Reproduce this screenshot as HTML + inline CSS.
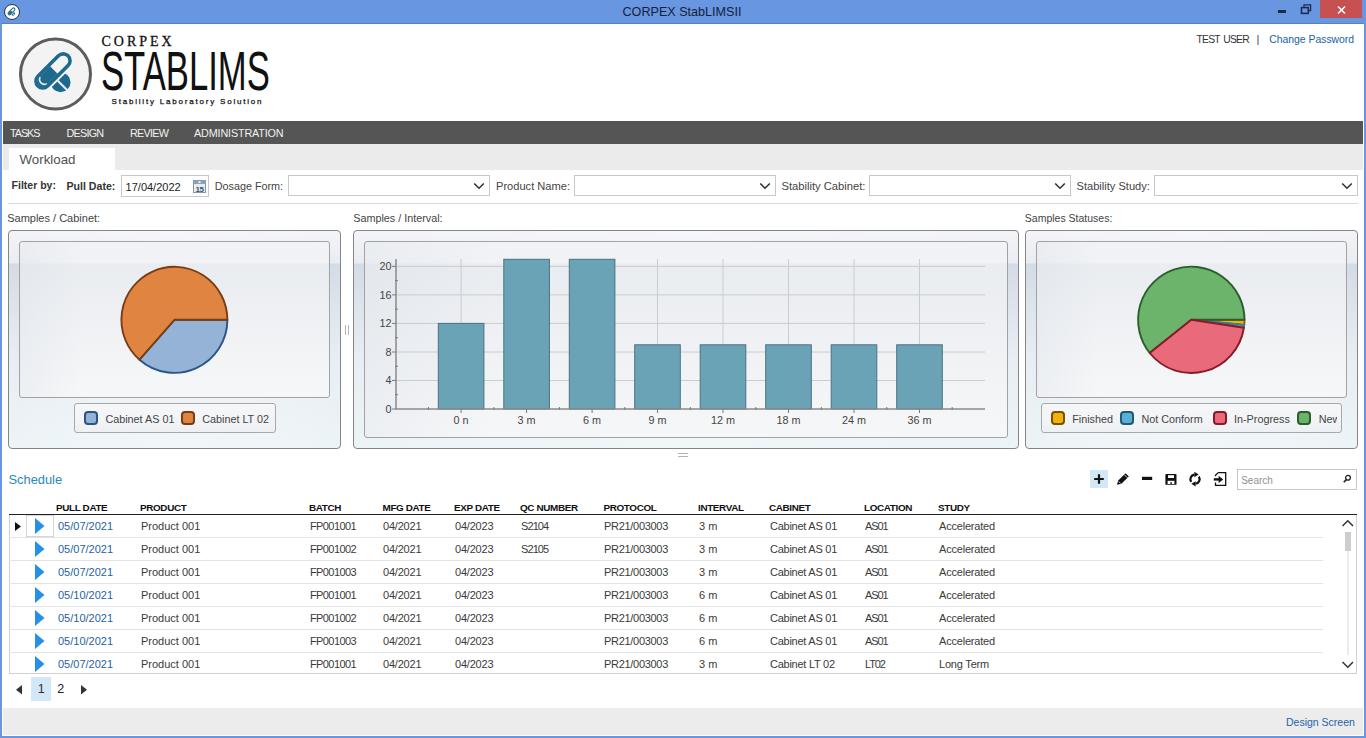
<!DOCTYPE html><html><head><meta charset="utf-8"><style>
html,body{margin:0;padding:0;width:1366px;height:738px;overflow:hidden;background:#fff;}
body{position:relative;font-family:"Liberation Sans",sans-serif;}
.t{position:absolute;white-space:nowrap;}
.b{position:absolute;box-sizing:border-box;}
svg{position:absolute;}
</style></head><body>
<div class="b" style="left:0px;top:0px;width:1366px;height:23px;background:#6896e0"></div>
<div class="b" style="left:0px;top:0px;width:2px;height:738px;background:#6896e0"></div>
<div class="b" style="left:1364px;top:0px;width:2px;height:738px;background:#6896e0"></div>
<div class="b" style="left:0px;top:736px;width:1366px;height:2px;background:#6896e0"></div>
<div class="b" style="left:1320px;top:0px;width:42px;height:18px;background:#c75050"></div>
<div class="b" style="left:2px;top:23px;width:1362px;height:1px;background:#5d7fc0"></div>
<svg style="left:3px;top:3px" width="18" height="18" viewBox="0 0 18 18">
<circle cx="9" cy="9" r="7.5" fill="#fdfdfd" stroke="#1f3556" stroke-width="1"/>
<g transform="translate(9 9) scale(0.2) translate(-41.5 -40) translate(39 36.9) rotate(-45)">
 <circle cx="-2.7" cy="13.4" r="10" fill="#1e6a8e"/>
 <rect x="-5" y="2" width="3" height="24" fill="#fdfdfd"/>
 <rect x="-25" y="-11" width="50" height="22" rx="11" fill="#fdfdfd"/>
 <rect x="-21.3" y="-6.8" width="42.6" height="13.6" rx="6.8" fill="none" stroke="#1e6a8e" stroke-width="5"/>
 <path d="M1.2 -5.3 H-14.5 A5.3 5.3 0 0 0 -14.5 5.3 H1.2 Z" fill="#1e6a8e"/>
</g>
</svg>
<div class="t" style="top:5.73px;font-size:12.6px;line-height:12.6px;color:#14213d;font-weight:400;left:622.5px;">CORPEX StabLIMSII</div>
<div class="b" style="left:1278px;top:10px;width:8px;height:3px;background:#1a2a4a"></div>
<svg style="left:1296px;top:0px" width="20" height="18" viewBox="1296 0 20 18">
<rect x="1301.5" y="7.6" width="6.8" height="5.8" fill="none" stroke="#1a2a4a" stroke-width="1.5"/>
<path d="M1304 6.8 V4.9 H1310.6 V10.6 H1309" fill="none" stroke="#1a2a4a" stroke-width="1.3"/>
</svg>
<svg style="left:1334px;top:3px" width="14" height="14" viewBox="0 0 14 14">
<path d="M4 3.5 L11 10.5 M11 3.5 L4 10.5" stroke="#fff" stroke-width="1.6"/>
</svg>
<svg style="left:14px;top:34px" width="84" height="80" viewBox="0 0 84 80">
<circle cx="41.5" cy="40" r="35" fill="#f3f3f3" stroke="#5c5c5c" stroke-width="3"/>
<g transform="translate(39 36.9) rotate(-45)">
 <circle cx="-2.7" cy="13.4" r="10" fill="#1e6a8e"/>
 <rect x="-4.6" y="2" width="2" height="24" fill="#f3f3f3"/>
 <rect x="-24.5" y="-10.5" width="49" height="21" rx="10.5" fill="#f3f3f3"/>
 <rect x="-21.3" y="-6.8" width="42.6" height="13.6" rx="6.8" fill="none" stroke="#1e6a8e" stroke-width="3.6"/>
 <path d="M1.2 -5.3 H-14.5 A5.3 5.3 0 0 0 -14.5 5.3 H1.2 Z" fill="#1e6a8e"/>
 <path d="M-13.5 -4.6 A4.8 4.8 0 0 0 -13.5 4.6" fill="none" stroke="#f3f3f3" stroke-width="1.5"/>
</g>
</svg>
<div class="t" style="top:35.05px;font-size:14px;line-height:14px;color:#111;font-weight:400;left:101.5px;font-family:'Liberation Serif', serif;letter-spacing:3.0px;-webkit-text-stroke:0.3px #111;">CORPEX</div>
<div class="t" style="left:100.5px;top:40.5px;font-family:'Liberation Sans',sans-serif;font-size:56px;line-height:60px;color:#111;transform:scaleX(0.619);transform-origin:0 0;letter-spacing:0px">STABLIMS</div>
<div class="t" style="top:97.53px;font-size:8px;line-height:8px;color:#111;font-weight:400;left:111.5px;letter-spacing:1.8px;-webkit-text-stroke:0.25px #111;">Stability Laboratory Solution</div>
<div class="t" style="top:34.78px;font-size:10.3px;line-height:10.3px;color:#333;font-weight:400;left:1196.5px;letter-spacing:-0.75px;word-spacing:1.5px;">TEST USER</div>
<div class="t" style="top:34.19px;font-size:11px;line-height:11px;color:#444;font-weight:400;left:1256.5px;">|</div>
<div class="t" style="top:34.50px;font-size:10.4px;line-height:10.4px;color:#2062a8;font-weight:400;left:1269.2px;">Change Password</div>
<div class="b" style="left:3px;top:121px;width:1360px;height:23px;background:#555555"></div>
<div class="t" style="top:127.66px;font-size:10.8px;line-height:10.8px;color:#f2f2f2;font-weight:400;left:10px;letter-spacing:-1.05px;">TASKS</div>
<div class="t" style="top:127.66px;font-size:10.8px;line-height:10.8px;color:#f2f2f2;font-weight:400;left:66.5px;letter-spacing:-0.75px;">DESIGN</div>
<div class="t" style="top:127.66px;font-size:10.8px;line-height:10.8px;color:#f2f2f2;font-weight:400;left:130px;letter-spacing:-0.75px;">REVIEW</div>
<div class="t" style="top:127.66px;font-size:10.8px;line-height:10.8px;color:#f2f2f2;font-weight:400;left:194px;letter-spacing:-0.15px;">ADMINISTRATION</div>
<div class="b" style="left:3px;top:144px;width:1360px;height:26px;background:#ebebeb"></div>
<div class="b" style="left:9px;top:148px;width:106px;height:22px;background:#fff"></div>
<div class="t" style="top:152.64px;font-size:13.3px;line-height:13.3px;color:#505050;font-weight:400;left:19.5px;">Workload</div>
<div class="t" style="top:180.41px;font-size:10.5px;line-height:10.5px;color:#333;font-weight:700;left:11.6px;">Filter by:</div>
<div class="t" style="top:180.83px;font-size:10.6px;line-height:10.6px;color:#333;font-weight:700;left:66.5px;">Pull Date:</div>
<div class="b" style="left:121px;top:175px;width:88px;height:22px;border:1px solid #c8c8c8;background:#fff"></div>
<div class="t" style="top:181.59px;font-size:11px;line-height:11px;color:#222;font-weight:400;left:125.6px;">17/04/2022</div>
<svg style="left:192px;top:179px" width="14" height="14" viewBox="0 0 14 14">
<rect x="1.5" y="1.5" width="12" height="12" fill="#e6ecf2" stroke="#8797a8" stroke-width="1"/>
<rect x="1.5" y="1.5" width="12" height="3.5" fill="#8ba2ba"/>
<rect x="6.5" y="2.3" width="2" height="1.6" fill="#fff"/>
<text x="7.6" y="12.6" font-family="Liberation Sans" font-size="8" font-weight="700" text-anchor="middle" fill="#3c5670" letter-spacing="-0.3">15</text>
</svg>
<div class="t" style="top:180.86px;font-size:10.8px;line-height:10.8px;color:#444;font-weight:400;left:214.7px;">Dosage Form:</div>
<div class="b" style="left:288px;top:175px;width:202px;height:21px;border:1px solid #c8c8c8;background:#fff"></div>
<svg style="left:472.5px;top:181px" width="12" height="10" viewBox="0 0 12 10"><path d="M1.2 2.5 L6 7.2 L10.8 2.5" fill="none" stroke="#333" stroke-width="1.6"/></svg>
<div class="t" style="top:180.60px;font-size:11.1px;line-height:11.1px;color:#444;font-weight:400;left:496px;">Product Name:</div>
<div class="b" style="left:574px;top:175px;width:202px;height:21px;border:1px solid #c8c8c8;background:#fff"></div>
<svg style="left:758.5px;top:181px" width="12" height="10" viewBox="0 0 12 10"><path d="M1.2 2.5 L6 7.2 L10.8 2.5" fill="none" stroke="#333" stroke-width="1.6"/></svg>
<div class="t" style="top:180.52px;font-size:11.2px;line-height:11.2px;color:#444;font-weight:400;left:781.5px;">Stability Cabinet:</div>
<div class="b" style="left:869px;top:175px;width:202px;height:21px;border:1px solid #c8c8c8;background:#fff"></div>
<svg style="left:1053.5px;top:181px" width="12" height="10" viewBox="0 0 12 10"><path d="M1.2 2.5 L6 7.2 L10.8 2.5" fill="none" stroke="#333" stroke-width="1.6"/></svg>
<div class="t" style="top:180.60px;font-size:11.1px;line-height:11.1px;color:#444;font-weight:400;left:1076.5px;">Stability Study:</div>
<div class="b" style="left:1154px;top:175px;width:204px;height:21px;border:1px solid #c8c8c8;background:#fff"></div>
<svg style="left:1340.5px;top:181px" width="12" height="10" viewBox="0 0 12 10"><path d="M1.2 2.5 L6 7.2 L10.8 2.5" fill="none" stroke="#333" stroke-width="1.6"/></svg>
<div class="b" style="left:8px;top:203px;width:1350px;height:1px;background:#d9d9d9"></div>
<div class="t" style="top:212.69px;font-size:11px;line-height:11px;color:#444;font-weight:400;left:7.2px;">Samples / Cabinet:</div>
<div class="t" style="top:212.56px;font-size:10.8px;line-height:10.8px;color:#444;font-weight:400;left:353.2px;">Samples / Interval:</div>
<div class="t" style="top:213.11px;font-size:10.5px;line-height:10.5px;color:#444;font-weight:400;left:1024.8px;">Samples Statuses:</div>
<div class="b" style="left:8px;top:230px;width:333px;height:219px;border:1px solid #858585;border-radius:4px;background:linear-gradient(to right, rgba(255,255,255,0) 0px, rgba(255,255,255,0.25) 50%, rgba(255,255,255,0) 100%),linear-gradient(to bottom,#f3f4f7 0px,#e9ecf1 32px,#d4dbe5 33px,#dde3eb 70px,#e8eef3 130px,#edf4f7 100%);"></div>
<div class="b" style="left:19px;top:241px;width:311px;height:157px;border:1px solid #a2a2a2;border-radius:3px;background:linear-gradient(to right,rgba(215,222,232,0.3) 0px,rgba(255,255,255,0) 20%),linear-gradient(to bottom,#f2f3f6 0px,#f0f2f5 21px,#e9ecf0 22px,#eef0f3 45%,#f6f7f8 100%);"></div>
<div class="b" style="left:353px;top:230px;width:666px;height:219px;border:1px solid #858585;border-radius:4px;background:linear-gradient(to right, rgba(255,255,255,0) 0px, rgba(255,255,255,0.25) 50%, rgba(255,255,255,0) 100%),linear-gradient(to bottom,#f3f4f7 0px,#e9ecf1 32px,#d4dbe5 33px,#dde3eb 70px,#e8eef3 130px,#edf4f7 100%);"></div>
<div class="b" style="left:364px;top:241px;width:644px;height:197px;border:1px solid #a2a2a2;border-radius:3px;background:linear-gradient(to right,rgba(215,222,232,0.3) 0px,rgba(255,255,255,0) 20%),linear-gradient(to bottom,#f2f3f6 0px,#f0f2f5 21px,#e9ecf0 22px,#eef0f3 45%,#f6f7f8 100%);"></div>
<div class="b" style="left:1025px;top:230px;width:333px;height:219px;border:1px solid #858585;border-radius:4px;background:linear-gradient(to right, rgba(255,255,255,0) 0px, rgba(255,255,255,0.25) 50%, rgba(255,255,255,0) 100%),linear-gradient(to bottom,#f3f4f7 0px,#e9ecf1 32px,#d4dbe5 33px,#dde3eb 70px,#e8eef3 130px,#edf4f7 100%);"></div>
<div class="b" style="left:1036px;top:241px;width:311px;height:157px;border:1px solid #a2a2a2;border-radius:3px;background:linear-gradient(to right,rgba(215,222,232,0.3) 0px,rgba(255,255,255,0) 20%),linear-gradient(to bottom,#f2f3f6 0px,#f0f2f5 21px,#e9ecf0 22px,#eef0f3 45%,#f6f7f8 100%);"></div>
<svg style="left:110px;top:255px" width="130" height="130" viewBox="110 255 130 130"><path d="M174.4 319.8 L227.40 319.80 A53 53 0 0 1 139.49 359.68 Z" fill="#94b3d7" stroke="#2a5585" stroke-width="1.9" stroke-linejoin="round"/><path d="M174.4 319.8 L139.49 359.68 A53 53 0 1 1 227.40 319.80 Z" fill="#e08442" stroke="#7a3c12" stroke-width="1.9" stroke-linejoin="round"/></svg>
<svg style="left:1126px;top:255px" width="130" height="130" viewBox="1126 255 130 130"><path d="M1191.3 319.8 L1244.50 319.80 A53.2 53.2 0 0 1 1244.25 324.99 Z" fill="#f2b210" stroke="#8a6000" stroke-width="1.9" stroke-linejoin="round"/><path d="M1191.3 319.8 L1244.25 324.99 A53.2 53.2 0 0 1 1243.90 327.76 Z" fill="#5ab0d2" stroke="#3a7a9a" stroke-width="1.9" stroke-linejoin="round"/><path d="M1191.3 319.8 L1149.72 352.99 A53.2 53.2 0 1 1 1244.50 319.80 Z" fill="#6cb46c" stroke="#2b5e2b" stroke-width="1.9" stroke-linejoin="round"/><path d="M1191.3 319.8 L1243.90 327.76 A53.2 53.2 0 0 1 1149.72 352.99 Z" fill="#e86a7b" stroke="#8a1a2a" stroke-width="1.9" stroke-linejoin="round"/></svg>
<div class="b" style="left:74px;top:403px;width:202px;height:30px;border:1px solid #a8a8a8;border-radius:3px;background:linear-gradient(to bottom,#f6f7f9,#eef1f4)"></div>
<div class="b" style="left:84px;top:411px;width:14px;height:14px;border:2px solid #2a5585;border-radius:4px;background:#94b3d7"></div>
<div class="t" style="top:413.86px;font-size:10.8px;line-height:10.8px;color:#444;font-weight:400;left:105.4px;">Cabinet AS 01</div>
<div class="b" style="left:181px;top:411px;width:14px;height:14px;border:2px solid #7a3c12;border-radius:4px;background:#e08442"></div>
<div class="t" style="top:413.86px;font-size:10.8px;line-height:10.8px;color:#444;font-weight:400;left:202.2px;">Cabinet LT 02</div>
<div class="b" style="left:1041px;top:403px;width:301px;height:30px;border:1px solid #a8a8a8;border-radius:3px;background:linear-gradient(to bottom,#f6f7f9,#eef1f4)"><div class="b" style="left:0;top:0;width:295px;height:28px;overflow:hidden">
<div class="b" style="left:9px;top:7px;width:14px;height:14px;border:2px solid #7a5200;border-radius:4px;background:#f2b210"></div>
<div class="t" style="left:30.200000000000045px;top:9.86px;font-size:10.8px;line-height:10.8px;color:#444">Finished</div>
<div class="b" style="left:78px;top:7px;width:14px;height:14px;border:2px solid #1f5a7a;border-radius:4px;background:#5ab0d2"></div>
<div class="t" style="left:99.5px;top:9.86px;font-size:10.8px;line-height:10.8px;color:#444">Not Conform</div>
<div class="b" style="left:171px;top:7px;width:14px;height:14px;border:2px solid #8a1a2a;border-radius:4px;background:#e86a7b"></div>
<div class="t" style="left:192px;top:9.86px;font-size:10.8px;line-height:10.8px;color:#444">In-Progress</div>
<div class="b" style="left:255px;top:7px;width:14px;height:14px;border:2px solid #2b5e2b;border-radius:4px;background:#6cb46c"></div>
<div class="t" style="left:276.70000000000005px;top:9.86px;font-size:10.8px;line-height:10.8px;color:#444">New</div>
</div></div>
<svg style="left:344px;top:325px" width="6" height="11"><path d="M1.5 0 V10 M4.5 0 V10" stroke="#b4b4b4" stroke-width="1"/></svg>
<svg style="left:678px;top:452px" width="11" height="6"><path d="M0 1.5 H10 M0 4.5 H10" stroke="#b4b4b4" stroke-width="1"/></svg>
<svg style="left:353px;top:230px" width="666" height="219" viewBox="353 230 666 219"><line x1="396" y1="380.5" x2="985" y2="380.5" stroke="#c9ccd2" stroke-width="1"/><line x1="396" y1="352.0" x2="985" y2="352.0" stroke="#c9ccd2" stroke-width="1"/><line x1="396" y1="323.4" x2="985" y2="323.4" stroke="#c9ccd2" stroke-width="1"/><line x1="396" y1="294.9" x2="985" y2="294.9" stroke="#c9ccd2" stroke-width="1"/><line x1="396" y1="266.4" x2="985" y2="266.4" stroke="#c9ccd2" stroke-width="1"/><line x1="461.1" y1="259" x2="461.1" y2="409.0" stroke="#c9ccd2" stroke-width="1"/><line x1="526.6" y1="259" x2="526.6" y2="409.0" stroke="#c9ccd2" stroke-width="1"/><line x1="592.1" y1="259" x2="592.1" y2="409.0" stroke="#c9ccd2" stroke-width="1"/><line x1="657.5" y1="259" x2="657.5" y2="409.0" stroke="#c9ccd2" stroke-width="1"/><line x1="723.0" y1="259" x2="723.0" y2="409.0" stroke="#c9ccd2" stroke-width="1"/><line x1="788.5" y1="259" x2="788.5" y2="409.0" stroke="#c9ccd2" stroke-width="1"/><line x1="854.0" y1="259" x2="854.0" y2="409.0" stroke="#c9ccd2" stroke-width="1"/><line x1="919.5" y1="259" x2="919.5" y2="409.0" stroke="#c9ccd2" stroke-width="1"/><rect x="438.3" y="323.4" width="45.6" height="85.6" fill="#6aa3b6" stroke="#4a7282" stroke-width="1"/><rect x="503.8" y="259.3" width="45.6" height="149.7" fill="#6aa3b6" stroke="#4a7282" stroke-width="1"/><rect x="569.3" y="259.3" width="45.6" height="149.7" fill="#6aa3b6" stroke="#4a7282" stroke-width="1"/><rect x="634.7" y="344.8" width="45.6" height="64.2" fill="#6aa3b6" stroke="#4a7282" stroke-width="1"/><rect x="700.2" y="344.8" width="45.6" height="64.2" fill="#6aa3b6" stroke="#4a7282" stroke-width="1"/><rect x="765.7" y="344.8" width="45.6" height="64.2" fill="#6aa3b6" stroke="#4a7282" stroke-width="1"/><rect x="831.2" y="344.8" width="45.6" height="64.2" fill="#6aa3b6" stroke="#4a7282" stroke-width="1"/><rect x="896.7" y="344.8" width="45.6" height="64.2" fill="#6aa3b6" stroke="#4a7282" stroke-width="1"/><line x1="396" y1="259" x2="396" y2="409.5" stroke="#8a8a8a" stroke-width="1.5"/><line x1="396" y1="409.0" x2="985" y2="409.0" stroke="#8a8a8a" stroke-width="1.5"/><line x1="392" y1="409.0" x2="396" y2="409.0" stroke="#7a7a7a" stroke-width="1"/><line x1="395" y1="394.7" x2="398" y2="394.7" stroke="#7a7a7a" stroke-width="1"/><line x1="392" y1="380.5" x2="396" y2="380.5" stroke="#7a7a7a" stroke-width="1"/><line x1="395" y1="366.2" x2="398" y2="366.2" stroke="#7a7a7a" stroke-width="1"/><line x1="392" y1="352.0" x2="396" y2="352.0" stroke="#7a7a7a" stroke-width="1"/><line x1="395" y1="337.7" x2="398" y2="337.7" stroke="#7a7a7a" stroke-width="1"/><line x1="392" y1="323.4" x2="396" y2="323.4" stroke="#7a7a7a" stroke-width="1"/><line x1="395" y1="309.2" x2="398" y2="309.2" stroke="#7a7a7a" stroke-width="1"/><line x1="392" y1="294.9" x2="396" y2="294.9" stroke="#7a7a7a" stroke-width="1"/><line x1="395" y1="280.7" x2="398" y2="280.7" stroke="#7a7a7a" stroke-width="1"/><line x1="392" y1="266.4" x2="396" y2="266.4" stroke="#7a7a7a" stroke-width="1"/><line x1="428.4" y1="407.0" x2="428.4" y2="410.0" stroke="#7a7a7a" stroke-width="1"/><line x1="493.9" y1="407.0" x2="493.9" y2="410.0" stroke="#7a7a7a" stroke-width="1"/><line x1="559.4" y1="407.0" x2="559.4" y2="410.0" stroke="#7a7a7a" stroke-width="1"/><line x1="624.8" y1="407.0" x2="624.8" y2="410.0" stroke="#7a7a7a" stroke-width="1"/><line x1="690.3" y1="407.0" x2="690.3" y2="410.0" stroke="#7a7a7a" stroke-width="1"/><line x1="755.8" y1="407.0" x2="755.8" y2="410.0" stroke="#7a7a7a" stroke-width="1"/><line x1="821.3" y1="407.0" x2="821.3" y2="410.0" stroke="#7a7a7a" stroke-width="1"/><line x1="886.8" y1="407.0" x2="886.8" y2="410.0" stroke="#7a7a7a" stroke-width="1"/><line x1="952.2" y1="407.0" x2="952.2" y2="410.0" stroke="#7a7a7a" stroke-width="1"/><line x1="461.1" y1="409.0" x2="461.1" y2="413.0" stroke="#7a7a7a" stroke-width="1"/><line x1="526.6" y1="409.0" x2="526.6" y2="413.0" stroke="#7a7a7a" stroke-width="1"/><line x1="592.1" y1="409.0" x2="592.1" y2="413.0" stroke="#7a7a7a" stroke-width="1"/><line x1="657.5" y1="409.0" x2="657.5" y2="413.0" stroke="#7a7a7a" stroke-width="1"/><line x1="723.0" y1="409.0" x2="723.0" y2="413.0" stroke="#7a7a7a" stroke-width="1"/><line x1="788.5" y1="409.0" x2="788.5" y2="413.0" stroke="#7a7a7a" stroke-width="1"/><line x1="854.0" y1="409.0" x2="854.0" y2="413.0" stroke="#7a7a7a" stroke-width="1"/><line x1="919.5" y1="409.0" x2="919.5" y2="413.0" stroke="#7a7a7a" stroke-width="1"/></svg>
<div class="t" style="top:403.86px;font-size:10.8px;line-height:10.8px;color:#444;font-weight:400;right:974.5px;">0</div>
<div class="t" style="top:375.34px;font-size:10.8px;line-height:10.8px;color:#444;font-weight:400;right:974.5px;">4</div>
<div class="t" style="top:346.82px;font-size:10.8px;line-height:10.8px;color:#444;font-weight:400;right:974.5px;">8</div>
<div class="t" style="top:318.30px;font-size:10.8px;line-height:10.8px;color:#444;font-weight:400;right:974.5px;">12</div>
<div class="t" style="top:289.78px;font-size:10.8px;line-height:10.8px;color:#444;font-weight:400;right:974.5px;">16</div>
<div class="t" style="top:261.26px;font-size:10.8px;line-height:10.8px;color:#444;font-weight:400;right:974.5px;">20</div>
<div class="t" style="top:414.86px;font-size:10.8px;line-height:10.8px;color:#444;font-weight:400;left:461.1px;transform:translateX(-50%);">0 n</div>
<div class="t" style="top:414.86px;font-size:10.8px;line-height:10.8px;color:#444;font-weight:400;left:526.58px;transform:translateX(-50%);">3 m</div>
<div class="t" style="top:414.86px;font-size:10.8px;line-height:10.8px;color:#444;font-weight:400;left:592.0600000000001px;transform:translateX(-50%);">6 m</div>
<div class="t" style="top:414.86px;font-size:10.8px;line-height:10.8px;color:#444;font-weight:400;left:657.54px;transform:translateX(-50%);">9 m</div>
<div class="t" style="top:414.86px;font-size:10.8px;line-height:10.8px;color:#444;font-weight:400;left:723.02px;transform:translateX(-50%);">12 m</div>
<div class="t" style="top:414.86px;font-size:10.8px;line-height:10.8px;color:#444;font-weight:400;left:788.5px;transform:translateX(-50%);">18 m</div>
<div class="t" style="top:414.86px;font-size:10.8px;line-height:10.8px;color:#444;font-weight:400;left:853.98px;transform:translateX(-50%);">24 m</div>
<div class="t" style="top:414.86px;font-size:10.8px;line-height:10.8px;color:#444;font-weight:400;left:919.46px;transform:translateX(-50%);">36 m</div>
<div class="t" style="top:473.62px;font-size:12.85px;line-height:12.85px;color:#2a88bb;font-weight:400;left:8.5px;">Schedule</div>
<div class="b" style="left:1090px;top:470px;width:18px;height:18px;background:#d2e8f7"></div>
<svg style="left:1080px;top:460px" width="160" height="32" viewBox="1080 460 160 32">
<path d="M1099 474.2 V483.8 M1094.2 479 H1103.8" stroke="#111" stroke-width="2.2"/>
<path d="M1117 484.8 L1118.2 480.6 L1125.6 473.2 L1128.8 476.4 L1121.4 483.8 Z" fill="#111"/>
<path d="M1118.6 481.4 L1120.6 483.4 M1124.2 474.6 L1127.4 477.8" stroke="#fff" stroke-width="0.8"/>
<path d="M1142 478.4 H1152.2" stroke="#111" stroke-width="3.2"/>
<path d="M1166.2 473.9 H1175.6 Q1176.5 473.9 1176.5 474.8 V484.8 H1165.4 V474.8 Q1165.4 473.9 1166.2 473.9 Z" fill="#111"/>
<rect x="1168" y="475.2" width="6" height="2.8" fill="#fff"/>
<rect x="1167.6" y="480.8" width="6.8" height="3.2" fill="#fff"/>
<rect x="1170.4" y="482.2" width="1.4" height="1.8" fill="#111"/>
<path d="M1191.23 481.84 A4.6 4.6 0 0 1 1194.36 474.64" fill="none" stroke="#111" stroke-width="2.2"/>
<path d="M1194.4 471.8 L1198.6 474.6 L1194.4 477.2 Z" fill="#111"/>
<path d="M1198.77 476.56 A4.6 4.6 0 0 1 1195.64 483.76" fill="none" stroke="#111" stroke-width="2.2"/>
<path d="M1195.6 481.2 L1191.4 483.8 L1195.6 486.6 Z" fill="#111"/>
<path d="M1218.2 472.6 H1225.7 V485.3 H1215.5 V482.5 M1215.5 476.3 V475.3 L1218.2 472.6" fill="none" stroke="#111" stroke-width="1.3"/>
<path d="M1213.8 479.4 H1219.5" stroke="#111" stroke-width="2.4"/>
<path d="M1218.6 475.8 L1223.2 479.4 L1218.6 483 Z" fill="#111"/>
</svg>
<div class="b" style="left:1237px;top:469px;width:120px;height:21px;border:1px solid #c8c8c8;background:#fff"></div>
<div class="t" style="top:476.03px;font-size:10px;line-height:10px;color:#909090;font-weight:400;left:1241.2px;">Search</div>
<svg style="left:1342px;top:474px" width="10" height="10" viewBox="0 0 10 10"><circle cx="6" cy="3.8" r="2.4" fill="none" stroke="#222" stroke-width="1.3"/><path d="M4.3 5.6 L1.8 8.3" stroke="#222" stroke-width="1.6"/></svg>
<div class="b" style="left:9px;top:514px;width:1348px;height:160px;border:1px solid #d0d0d0;border-top:none;background:#fff"></div>
<div class="b" style="left:9px;top:514px;width:1348px;height:1px;background:#222"></div>
<div class="t" style="top:502.62px;font-size:9.9px;line-height:9.9px;color:#111;font-weight:700;left:56px;letter-spacing:-0.35px;">PULL DATE</div>
<div class="t" style="top:502.62px;font-size:9.9px;line-height:9.9px;color:#111;font-weight:700;left:140px;letter-spacing:-0.35px;">PRODUCT</div>
<div class="t" style="top:502.62px;font-size:9.9px;line-height:9.9px;color:#111;font-weight:700;left:309px;letter-spacing:-0.35px;">BATCH</div>
<div class="t" style="top:502.62px;font-size:9.9px;line-height:9.9px;color:#111;font-weight:700;left:382.5px;letter-spacing:-0.35px;">MFG DATE</div>
<div class="t" style="top:502.62px;font-size:9.9px;line-height:9.9px;color:#111;font-weight:700;left:454px;letter-spacing:-0.35px;">EXP DATE</div>
<div class="t" style="top:502.62px;font-size:9.9px;line-height:9.9px;color:#111;font-weight:700;left:520px;letter-spacing:-0.35px;">QC NUMBER</div>
<div class="t" style="top:502.62px;font-size:9.9px;line-height:9.9px;color:#111;font-weight:700;left:603.5px;letter-spacing:-0.35px;">PROTOCOL</div>
<div class="t" style="top:502.62px;font-size:9.9px;line-height:9.9px;color:#111;font-weight:700;left:698px;letter-spacing:-0.35px;">INTERVAL</div>
<div class="t" style="top:502.62px;font-size:9.9px;line-height:9.9px;color:#111;font-weight:700;left:769px;letter-spacing:-0.35px;">CABINET</div>
<div class="t" style="top:502.62px;font-size:9.9px;line-height:9.9px;color:#111;font-weight:700;left:864px;letter-spacing:-0.35px;">LOCATION</div>
<div class="t" style="top:502.62px;font-size:9.9px;line-height:9.9px;color:#111;font-weight:700;left:938px;letter-spacing:-0.35px;">STUDY</div>
<div class="b" style="left:9px;top:537px;width:1314px;height:1px;background:#e3e3e3"></div>
<div class="t" style="top:520.69px;font-size:11px;line-height:11px;color:#1f5fa5;font-weight:400;left:58px;letter-spacing:0px;">05/07/2021</div>
<div class="t" style="top:520.69px;font-size:11px;line-height:11px;color:#3a3a3a;font-weight:400;left:141px;letter-spacing:0px;">Product 001</div>
<div class="t" style="top:520.69px;font-size:11px;line-height:11px;color:#3a3a3a;font-weight:400;left:310px;letter-spacing:-0.6px;">FP001001</div>
<div class="t" style="top:520.69px;font-size:11px;line-height:11px;color:#3a3a3a;font-weight:400;left:383px;letter-spacing:-0.2px;">04/2021</div>
<div class="t" style="top:520.69px;font-size:11px;line-height:11px;color:#3a3a3a;font-weight:400;left:455px;letter-spacing:-0.2px;">04/2023</div>
<div class="t" style="top:520.69px;font-size:11px;line-height:11px;color:#3a3a3a;font-weight:400;left:521px;letter-spacing:-0.9px;">S2104</div>
<div class="t" style="top:520.69px;font-size:11px;line-height:11px;color:#3a3a3a;font-weight:400;left:604px;letter-spacing:-0.3px;">PR21/003003</div>
<div class="t" style="top:520.69px;font-size:11px;line-height:11px;color:#3a3a3a;font-weight:400;left:699px;letter-spacing:0px;">3 m</div>
<div class="t" style="top:520.69px;font-size:11px;line-height:11px;color:#3a3a3a;font-weight:400;left:770px;letter-spacing:-0.25px;">Cabinet AS 01</div>
<div class="t" style="top:520.69px;font-size:11px;line-height:11px;color:#3a3a3a;font-weight:400;left:865px;letter-spacing:-1.1px;">AS01</div>
<div class="t" style="top:520.69px;font-size:11px;line-height:11px;color:#3a3a3a;font-weight:400;left:939px;letter-spacing:-0.2px;">Accelerated</div>
<svg style="left:35px;top:518px" width="10" height="16" viewBox="0 0 10 16"><path d="M0 0 L9.5 8 L0 16 Z" fill="#2590e6"/></svg>
<div class="b" style="left:9px;top:560px;width:1314px;height:1px;background:#e3e3e3"></div>
<div class="t" style="top:543.69px;font-size:11px;line-height:11px;color:#1f5fa5;font-weight:400;left:58px;letter-spacing:0px;">05/07/2021</div>
<div class="t" style="top:543.69px;font-size:11px;line-height:11px;color:#3a3a3a;font-weight:400;left:141px;letter-spacing:0px;">Product 001</div>
<div class="t" style="top:543.69px;font-size:11px;line-height:11px;color:#3a3a3a;font-weight:400;left:310px;letter-spacing:-0.6px;">FP001002</div>
<div class="t" style="top:543.69px;font-size:11px;line-height:11px;color:#3a3a3a;font-weight:400;left:383px;letter-spacing:-0.2px;">04/2021</div>
<div class="t" style="top:543.69px;font-size:11px;line-height:11px;color:#3a3a3a;font-weight:400;left:455px;letter-spacing:-0.2px;">04/2023</div>
<div class="t" style="top:543.69px;font-size:11px;line-height:11px;color:#3a3a3a;font-weight:400;left:521px;letter-spacing:-0.9px;">S2105</div>
<div class="t" style="top:543.69px;font-size:11px;line-height:11px;color:#3a3a3a;font-weight:400;left:604px;letter-spacing:-0.3px;">PR21/003003</div>
<div class="t" style="top:543.69px;font-size:11px;line-height:11px;color:#3a3a3a;font-weight:400;left:699px;letter-spacing:0px;">3 m</div>
<div class="t" style="top:543.69px;font-size:11px;line-height:11px;color:#3a3a3a;font-weight:400;left:770px;letter-spacing:-0.25px;">Cabinet AS 01</div>
<div class="t" style="top:543.69px;font-size:11px;line-height:11px;color:#3a3a3a;font-weight:400;left:865px;letter-spacing:-1.1px;">AS01</div>
<div class="t" style="top:543.69px;font-size:11px;line-height:11px;color:#3a3a3a;font-weight:400;left:939px;letter-spacing:-0.2px;">Accelerated</div>
<svg style="left:35px;top:541px" width="10" height="16" viewBox="0 0 10 16"><path d="M0 0 L9.5 8 L0 16 Z" fill="#2590e6"/></svg>
<div class="b" style="left:9px;top:583px;width:1314px;height:1px;background:#e3e3e3"></div>
<div class="t" style="top:566.69px;font-size:11px;line-height:11px;color:#1f5fa5;font-weight:400;left:58px;letter-spacing:0px;">05/07/2021</div>
<div class="t" style="top:566.69px;font-size:11px;line-height:11px;color:#3a3a3a;font-weight:400;left:141px;letter-spacing:0px;">Product 001</div>
<div class="t" style="top:566.69px;font-size:11px;line-height:11px;color:#3a3a3a;font-weight:400;left:310px;letter-spacing:-0.6px;">FP001003</div>
<div class="t" style="top:566.69px;font-size:11px;line-height:11px;color:#3a3a3a;font-weight:400;left:383px;letter-spacing:-0.2px;">04/2021</div>
<div class="t" style="top:566.69px;font-size:11px;line-height:11px;color:#3a3a3a;font-weight:400;left:455px;letter-spacing:-0.2px;">04/2023</div>
<div class="t" style="top:566.69px;font-size:11px;line-height:11px;color:#3a3a3a;font-weight:400;left:521px;letter-spacing:-0.9px;"></div>
<div class="t" style="top:566.69px;font-size:11px;line-height:11px;color:#3a3a3a;font-weight:400;left:604px;letter-spacing:-0.3px;">PR21/003003</div>
<div class="t" style="top:566.69px;font-size:11px;line-height:11px;color:#3a3a3a;font-weight:400;left:699px;letter-spacing:0px;">3 m</div>
<div class="t" style="top:566.69px;font-size:11px;line-height:11px;color:#3a3a3a;font-weight:400;left:770px;letter-spacing:-0.25px;">Cabinet AS 01</div>
<div class="t" style="top:566.69px;font-size:11px;line-height:11px;color:#3a3a3a;font-weight:400;left:865px;letter-spacing:-1.1px;">AS01</div>
<div class="t" style="top:566.69px;font-size:11px;line-height:11px;color:#3a3a3a;font-weight:400;left:939px;letter-spacing:-0.2px;">Accelerated</div>
<svg style="left:35px;top:564px" width="10" height="16" viewBox="0 0 10 16"><path d="M0 0 L9.5 8 L0 16 Z" fill="#2590e6"/></svg>
<div class="b" style="left:9px;top:606px;width:1314px;height:1px;background:#e3e3e3"></div>
<div class="t" style="top:589.69px;font-size:11px;line-height:11px;color:#1f5fa5;font-weight:400;left:58px;letter-spacing:0px;">05/10/2021</div>
<div class="t" style="top:589.69px;font-size:11px;line-height:11px;color:#3a3a3a;font-weight:400;left:141px;letter-spacing:0px;">Product 001</div>
<div class="t" style="top:589.69px;font-size:11px;line-height:11px;color:#3a3a3a;font-weight:400;left:310px;letter-spacing:-0.6px;">FP001001</div>
<div class="t" style="top:589.69px;font-size:11px;line-height:11px;color:#3a3a3a;font-weight:400;left:383px;letter-spacing:-0.2px;">04/2021</div>
<div class="t" style="top:589.69px;font-size:11px;line-height:11px;color:#3a3a3a;font-weight:400;left:455px;letter-spacing:-0.2px;">04/2023</div>
<div class="t" style="top:589.69px;font-size:11px;line-height:11px;color:#3a3a3a;font-weight:400;left:521px;letter-spacing:-0.9px;"></div>
<div class="t" style="top:589.69px;font-size:11px;line-height:11px;color:#3a3a3a;font-weight:400;left:604px;letter-spacing:-0.3px;">PR21/003003</div>
<div class="t" style="top:589.69px;font-size:11px;line-height:11px;color:#3a3a3a;font-weight:400;left:699px;letter-spacing:0px;">6 m</div>
<div class="t" style="top:589.69px;font-size:11px;line-height:11px;color:#3a3a3a;font-weight:400;left:770px;letter-spacing:-0.25px;">Cabinet AS 01</div>
<div class="t" style="top:589.69px;font-size:11px;line-height:11px;color:#3a3a3a;font-weight:400;left:865px;letter-spacing:-1.1px;">AS01</div>
<div class="t" style="top:589.69px;font-size:11px;line-height:11px;color:#3a3a3a;font-weight:400;left:939px;letter-spacing:-0.2px;">Accelerated</div>
<svg style="left:35px;top:587px" width="10" height="16" viewBox="0 0 10 16"><path d="M0 0 L9.5 8 L0 16 Z" fill="#2590e6"/></svg>
<div class="b" style="left:9px;top:629px;width:1314px;height:1px;background:#e3e3e3"></div>
<div class="t" style="top:612.69px;font-size:11px;line-height:11px;color:#1f5fa5;font-weight:400;left:58px;letter-spacing:0px;">05/10/2021</div>
<div class="t" style="top:612.69px;font-size:11px;line-height:11px;color:#3a3a3a;font-weight:400;left:141px;letter-spacing:0px;">Product 001</div>
<div class="t" style="top:612.69px;font-size:11px;line-height:11px;color:#3a3a3a;font-weight:400;left:310px;letter-spacing:-0.6px;">FP001002</div>
<div class="t" style="top:612.69px;font-size:11px;line-height:11px;color:#3a3a3a;font-weight:400;left:383px;letter-spacing:-0.2px;">04/2021</div>
<div class="t" style="top:612.69px;font-size:11px;line-height:11px;color:#3a3a3a;font-weight:400;left:455px;letter-spacing:-0.2px;">04/2023</div>
<div class="t" style="top:612.69px;font-size:11px;line-height:11px;color:#3a3a3a;font-weight:400;left:521px;letter-spacing:-0.9px;"></div>
<div class="t" style="top:612.69px;font-size:11px;line-height:11px;color:#3a3a3a;font-weight:400;left:604px;letter-spacing:-0.3px;">PR21/003003</div>
<div class="t" style="top:612.69px;font-size:11px;line-height:11px;color:#3a3a3a;font-weight:400;left:699px;letter-spacing:0px;">6 m</div>
<div class="t" style="top:612.69px;font-size:11px;line-height:11px;color:#3a3a3a;font-weight:400;left:770px;letter-spacing:-0.25px;">Cabinet AS 01</div>
<div class="t" style="top:612.69px;font-size:11px;line-height:11px;color:#3a3a3a;font-weight:400;left:865px;letter-spacing:-1.1px;">AS01</div>
<div class="t" style="top:612.69px;font-size:11px;line-height:11px;color:#3a3a3a;font-weight:400;left:939px;letter-spacing:-0.2px;">Accelerated</div>
<svg style="left:35px;top:610px" width="10" height="16" viewBox="0 0 10 16"><path d="M0 0 L9.5 8 L0 16 Z" fill="#2590e6"/></svg>
<div class="b" style="left:9px;top:652px;width:1314px;height:1px;background:#e3e3e3"></div>
<div class="t" style="top:635.69px;font-size:11px;line-height:11px;color:#1f5fa5;font-weight:400;left:58px;letter-spacing:0px;">05/10/2021</div>
<div class="t" style="top:635.69px;font-size:11px;line-height:11px;color:#3a3a3a;font-weight:400;left:141px;letter-spacing:0px;">Product 001</div>
<div class="t" style="top:635.69px;font-size:11px;line-height:11px;color:#3a3a3a;font-weight:400;left:310px;letter-spacing:-0.6px;">FP001003</div>
<div class="t" style="top:635.69px;font-size:11px;line-height:11px;color:#3a3a3a;font-weight:400;left:383px;letter-spacing:-0.2px;">04/2021</div>
<div class="t" style="top:635.69px;font-size:11px;line-height:11px;color:#3a3a3a;font-weight:400;left:455px;letter-spacing:-0.2px;">04/2023</div>
<div class="t" style="top:635.69px;font-size:11px;line-height:11px;color:#3a3a3a;font-weight:400;left:521px;letter-spacing:-0.9px;"></div>
<div class="t" style="top:635.69px;font-size:11px;line-height:11px;color:#3a3a3a;font-weight:400;left:604px;letter-spacing:-0.3px;">PR21/003003</div>
<div class="t" style="top:635.69px;font-size:11px;line-height:11px;color:#3a3a3a;font-weight:400;left:699px;letter-spacing:0px;">6 m</div>
<div class="t" style="top:635.69px;font-size:11px;line-height:11px;color:#3a3a3a;font-weight:400;left:770px;letter-spacing:-0.25px;">Cabinet AS 01</div>
<div class="t" style="top:635.69px;font-size:11px;line-height:11px;color:#3a3a3a;font-weight:400;left:865px;letter-spacing:-1.1px;">AS01</div>
<div class="t" style="top:635.69px;font-size:11px;line-height:11px;color:#3a3a3a;font-weight:400;left:939px;letter-spacing:-0.2px;">Accelerated</div>
<svg style="left:35px;top:633px" width="10" height="16" viewBox="0 0 10 16"><path d="M0 0 L9.5 8 L0 16 Z" fill="#2590e6"/></svg>
<div class="t" style="top:658.69px;font-size:11px;line-height:11px;color:#1f5fa5;font-weight:400;left:58px;letter-spacing:0px;">05/07/2021</div>
<div class="t" style="top:658.69px;font-size:11px;line-height:11px;color:#3a3a3a;font-weight:400;left:141px;letter-spacing:0px;">Product 001</div>
<div class="t" style="top:658.69px;font-size:11px;line-height:11px;color:#3a3a3a;font-weight:400;left:310px;letter-spacing:-0.6px;">FP001001</div>
<div class="t" style="top:658.69px;font-size:11px;line-height:11px;color:#3a3a3a;font-weight:400;left:383px;letter-spacing:-0.2px;">04/2021</div>
<div class="t" style="top:658.69px;font-size:11px;line-height:11px;color:#3a3a3a;font-weight:400;left:455px;letter-spacing:-0.2px;">04/2023</div>
<div class="t" style="top:658.69px;font-size:11px;line-height:11px;color:#3a3a3a;font-weight:400;left:521px;letter-spacing:-0.9px;"></div>
<div class="t" style="top:658.69px;font-size:11px;line-height:11px;color:#3a3a3a;font-weight:400;left:604px;letter-spacing:-0.3px;">PR21/003003</div>
<div class="t" style="top:658.69px;font-size:11px;line-height:11px;color:#3a3a3a;font-weight:400;left:699px;letter-spacing:0px;">3 m</div>
<div class="t" style="top:658.69px;font-size:11px;line-height:11px;color:#3a3a3a;font-weight:400;left:770px;letter-spacing:-0.25px;">Cabinet LT 02</div>
<div class="t" style="top:658.69px;font-size:11px;line-height:11px;color:#3a3a3a;font-weight:400;left:865px;letter-spacing:-1.1px;">LT02</div>
<div class="t" style="top:658.69px;font-size:11px;line-height:11px;color:#3a3a3a;font-weight:400;left:939px;letter-spacing:-0.2px;">Long Term</div>
<svg style="left:35px;top:656px" width="10" height="16" viewBox="0 0 10 16"><path d="M0 0 L9.5 8 L0 16 Z" fill="#2590e6"/></svg>
<div class="b" style="left:26px;top:515px;width:28px;height:22px;border:1px solid #d6d6d6"></div>
<svg style="left:15px;top:522px" width="7" height="9" viewBox="0 0 7 9"><path d="M0 0 L6 4.5 L0 9 Z" fill="#111"/></svg>
<svg style="left:1341px;top:518px" width="14" height="152" viewBox="0 0 14 152"><path d="M1.5 8 L6.8 2.8 L12 8" fill="none" stroke="#333" stroke-width="1.5"/><path d="M1.5 144 L6.8 149.2 L12 144" fill="none" stroke="#333" stroke-width="1.5"/></svg>
<div class="b" style="left:1347px;top:551px;width:2px;height:104px;background:#ececec"></div>
<div class="b" style="left:1345px;top:532px;width:6px;height:19px;background:#cdcdcd"></div>
<div class="b" style="left:31px;top:677px;width:20px;height:24px;background:#d2e8f7"></div>
<svg style="left:16px;top:685px" width="7" height="10" viewBox="0 0 7 10"><path d="M6 0 V9.5 L0 4.75 Z" fill="#333"/></svg>
<svg style="left:81px;top:685px" width="7" height="10" viewBox="0 0 7 10"><path d="M0 0 V9.5 L6 4.75 Z" fill="#333"/></svg>
<div class="t" style="top:683.42px;font-size:12.5px;line-height:12.5px;color:#333;font-weight:400;left:37.8px;">1</div>
<div class="t" style="top:683.42px;font-size:12.5px;line-height:12.5px;color:#222;font-weight:400;left:57.3px;">2</div>
<div class="b" style="left:3px;top:708px;width:1360px;height:26.5px;background:#ececec"></div>
<div class="t" style="top:717.11px;font-size:10.5px;line-height:10.5px;color:#1f62ab;font-weight:400;left:1286px;">Design Screen</div>
</body></html>
